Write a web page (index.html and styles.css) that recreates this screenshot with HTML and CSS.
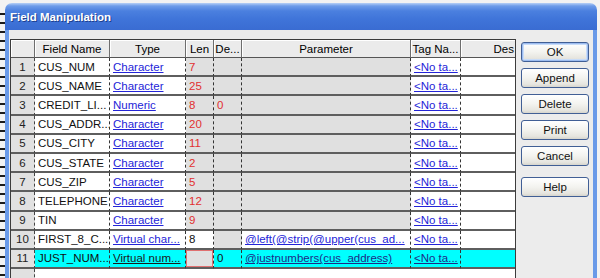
FILE: index.html
```html
<!DOCTYPE html>
<html lang="en">
<head>
    <meta charset="UTF-8">
    <title>Field Manipulation</title>
    <link rel="stylesheet" href="styles.css">
</head>
<body>
    <div class="desk">
        <div class="ticks"></div>
        <div class="window">
            <div class="titlebar"><span class="title">Field Manipulation</span></div>
            <div class="client">
                <div class="grid">
                    <div class="rows">
                        <!-- header -->
                        <div class="c h"></div>
                        <div class="c h">Field Name</div>
                        <div class="c h">Type</div>
                        <div class="c h">Len</div>
                        <div class="c h">De...</div>
                        <div class="c h">Parameter</div>
                        <div class="c h">Tag Na...</div>
                        <div class="c h last">Des</div>

                        <div class="c num">1</div>
                        <div class="c">CUS_NUM</div>
                        <div class="c"><span class="link">Character</span></div>
                        <div class="c grey red">7</div>
                        <div class="c grey"></div>
                        <div class="c grey"></div>
                        <div class="c"><span class="link">&lt;No ta...</span></div>
                        <div class="c"></div>

                        <div class="c num">2</div>
                        <div class="c">CUS_NAME</div>
                        <div class="c"><span class="link">Character</span></div>
                        <div class="c grey red">25</div>
                        <div class="c grey"></div>
                        <div class="c grey"></div>
                        <div class="c"><span class="link">&lt;No ta...</span></div>
                        <div class="c"></div>

                        <div class="c num">3</div>
                        <div class="c">CREDIT_LI...</div>
                        <div class="c"><span class="link">Numeric</span></div>
                        <div class="c grey red">8</div>
                        <div class="c grey red">0</div>
                        <div class="c grey"></div>
                        <div class="c"><span class="link">&lt;No ta...</span></div>
                        <div class="c"></div>

                        <div class="c num">4</div>
                        <div class="c">CUS_ADDR...</div>
                        <div class="c"><span class="link">Character</span></div>
                        <div class="c grey red">20</div>
                        <div class="c grey"></div>
                        <div class="c grey"></div>
                        <div class="c"><span class="link">&lt;No ta...</span></div>
                        <div class="c"></div>

                        <div class="c num">5</div>
                        <div class="c">CUS_CITY</div>
                        <div class="c"><span class="link">Character</span></div>
                        <div class="c grey red">11</div>
                        <div class="c grey"></div>
                        <div class="c grey"></div>
                        <div class="c"><span class="link">&lt;No ta...</span></div>
                        <div class="c"></div>

                        <div class="c num">6</div>
                        <div class="c">CUS_STATE</div>
                        <div class="c"><span class="link">Character</span></div>
                        <div class="c grey red">2</div>
                        <div class="c grey"></div>
                        <div class="c grey"></div>
                        <div class="c"><span class="link">&lt;No ta...</span></div>
                        <div class="c"></div>

                        <div class="c num">7</div>
                        <div class="c">CUS_ZIP</div>
                        <div class="c"><span class="link">Character</span></div>
                        <div class="c grey red">5</div>
                        <div class="c grey"></div>
                        <div class="c grey"></div>
                        <div class="c"><span class="link">&lt;No ta...</span></div>
                        <div class="c"></div>

                        <div class="c num">8</div>
                        <div class="c">TELEPHONE</div>
                        <div class="c"><span class="link">Character</span></div>
                        <div class="c grey red">12</div>
                        <div class="c grey"></div>
                        <div class="c grey"></div>
                        <div class="c"><span class="link">&lt;No ta...</span></div>
                        <div class="c"></div>

                        <div class="c num">9</div>
                        <div class="c">TIN</div>
                        <div class="c"><span class="link">Character</span></div>
                        <div class="c grey red">9</div>
                        <div class="c grey"></div>
                        <div class="c grey"></div>
                        <div class="c"><span class="link">&lt;No ta...</span></div>
                        <div class="c"></div>

                        <div class="c num">10</div>
                        <div class="c">FIRST_8_C...</div>
                        <div class="c"><span class="link">Virtual char...</span></div>
                        <div class="c">8</div>
                        <div class="c grey"></div>
                        <div class="c"><span class="link">@left(@strip(@upper(cus_ad...</span></div>
                        <div class="c"><span class="link">&lt;No ta...</span></div>
                        <div class="c"></div>

                        <!-- current row -->
                        <div class="c num">11</div>
                        <div class="c sel">JUST_NUM...</div>
                        <div class="c sel"><span class="link dark">Virtual num...</span></div>
                        <div class="c focus"></div>
                        <div class="c sel">0</div>
                        <div class="c sel"><span class="link navy">@justnumbers(cus_address)</span></div>
                        <div class="c sel"><span class="link navy">&lt;No ta...</span></div>
                        <div class="c sel"></div>

                        <div class="c num blank"></div>
                        <div class="fill"></div>
                    </div>
                </div>
                <div class="buttons">
                    <button class="btn default">OK</button>
                    <button class="btn">Append</button>
                    <button class="btn">Delete</button>
                    <button class="btn">Print</button>
                    <button class="btn">Cancel</button>
                    <button class="btn help">Help</button>
                </div>
            </div>
        </div>
    </div>
</body>
</html>
```

FILE: styles.css
```css
body {
    margin: 0;
    background: #f2f2f2;
    font-family: "Liberation Sans", Arial, sans-serif;
    font-size: 11.5px;
    overflow: hidden;
}
.desk {
    display: flex;
    height: 278px;
    padding-top: 3px;
    box-sizing: border-box;
}
.ticks {
    width: 5px;
    margin-top: 6px;
    background: repeating-linear-gradient(to bottom, #f2f2f2 0 4px, #1a1a1a 4px 6px, #f2f2f2 6px 9px);
}
.window {
    width: 592px;
    display: flex;
    flex-direction: column;
}
.titlebar {
    height: 27px;
    flex-shrink: 0;
    display: flex;
    align-items: center;
    padding-left: 5px;
    border-radius: 7px 7px 0 0;
    background: linear-gradient(to bottom, #b6d0f6 0, #6d9be9 3px, #4b80df 8px, #3f74d9 60%, #3a6cd2 100%);
}
.title {
    color: #fff;
    font-weight: bold;
    font-size: 11.5px;
    text-shadow: 1px 1px 0 #1d3f8f;
}
.client {
    flex: 1;
    display: flex;
    align-items: flex-start;
    gap: 5px;
    padding: 9px 0 0 1px;
    background: #ececec;
    border-left: 4px solid #6a9ae8;
    border-right: 4px solid #6a9ae8;
}
.grid {
    width: 504px;
    height: 260px;
    border: 1px solid #3c3c3c;
    overflow: hidden;
    background: #fff;
    flex-shrink: 0;
}
.rows {
    display: grid;
    grid-template-columns: 24px 75px 76px 28px 28px 169px 50px 54px;
    grid-template-rows: 18px repeat(11, 19.2px) 40px;
}
.c {
    display: flex;
    align-items: center;
    padding: 0 3px;
    white-space: nowrap;
    overflow: hidden;
    box-sizing: border-box;
    border-right: 1px dashed #333;
    border-bottom: 2px solid #5e5e5e;
    color: #111;
}
.c:nth-child(8n) {
    border-right: 0;
}
.h {
    justify-content: center;
    background: #ebebeb;
    border-right: 1px solid #6e6e6e;
    border-bottom: 1px solid #555;
    box-shadow: inset 1px 1px 0 #fff;
    color: #000;
}
.h.last {
    justify-content: flex-end;
    padding-right: 1px;
}
.num {
    justify-content: center;
    background: #e1e1e1;
    color: #222;
    border-right: 1px dashed #444;
}
.grey {
    background: #e0e0e0;
}
.red {
    color: #e23030;
}
.link {
    color: #2424d8;
    text-decoration: underline;
}
.link.dark {
    color: #1a1a1a;
}
.link.navy {
    color: #1d2a86;
}
.sel {
    background: #00ffff;
}
.focus {
    background: #e0e0e0;
    box-shadow: inset 0 0 0 1px #e07070;
}
.blank {
    border-bottom: 0;
}
.fill {
    grid-column: 2 / 9;
    background: #fff;
}
.buttons {
    display: flex;
    flex-direction: column;
    gap: 6px;
    padding-top: 3px;
    width: 68px;
}
.btn {
    height: 20px;
    padding: 0;
    font-family: "Liberation Sans", Arial, sans-serif;
    font-size: 11.5px;
    color: #111;
    border: 1px solid #415f95;
    border-radius: 3px;
    background: linear-gradient(to bottom, #ffffff 0, #f3f3ef 50%, #e6e5df 85%, #d6d5cd 100%);
}
.btn.default {
    box-shadow: inset 0 0 0 1px #9cbcf0, inset 0 0 0 2px #c8dcf8;
}
.help {
    margin-top: 5px;
}
```
